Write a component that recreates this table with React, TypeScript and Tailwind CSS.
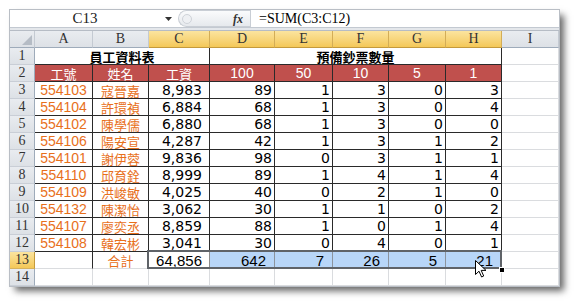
import clsx from "clsx";

const colW = [
  "w-[25px]",
  "w-[58px]",
  "w-[56px]",
  "w-[61px]",
  "w-[65px]",
  "w-[58px]",
  "w-[56px]",
  "w-[57px]",
  "w-[56px]",
  "w-[57px]",
];
const letters = ["A", "B", "C", "D", "E", "F", "G", "H", "I"];

const rows: [string, string, string, number, number, number, number, number][] = [
  ["554103", "寇晉嘉", "8,983", 89, 1, 3, 0, 3],
  ["554104", "許環禎", "6,884", 68, 1, 3, 0, 4],
  ["554102", "陳學儒", "6,880", 68, 1, 3, 0, 0],
  ["554106", "陽安宣", "4,287", 42, 1, 3, 1, 2],
  ["554101", "謝伊蓉", "9,836", 98, 0, 3, 1, 1],
  ["554110", "邱育銓", "8,999", 89, 1, 4, 1, 4],
  ["554109", "洪峻敏", "4,025", 40, 0, 2, 1, 0],
  ["554132", "陳潔怡", "3,062", 30, 1, 1, 0, 2],
  ["554107", "廖奕丞", "8,859", 88, 1, 0, 1, 4],
  ["554108", "韓宏彬", "3,041", 30, 0, 4, 0, 1],
];

const serif = "font-['Liberation_Serif',serif]";
const cjk = "font-['Noto_Sans_CJK_TC',sans-serif]";
const sans = "font-['Liberation_Sans',sans-serif]";
const wide = "font-['DejaVu_Sans',sans-serif]";

function RowHead({ n, on }: { n: number; on?: boolean }) {
  return (
    <div
      className={clsx(
        colW[0],
        serif,
        "shrink-0 h-full flex items-center justify-center border-r border-b text-[14px] leading-none text-[#333]",
        on
          ? "bg-linear-to-b from-[#fbe49e] to-[#f4c857] border-r-[#c49a3c] border-b-[#d7b25c]"
          : "bg-linear-to-b from-[#e9ecf0] to-[#dde1e6] border-r-[#9eabba] border-b-[#c9ced6]"
      )}
    >
      {n}
    </div>
  );
}

function Cell({
  i,
  className,
  children,
}: {
  i: number;
  className?: string;
  children?: React.ReactNode;
}) {
  return (
    <div
      className={clsx(
        colW[i],
        "shrink-0 h-full flex items-center border-r border-b whitespace-nowrap leading-none",
        className
      )}
    >
      {children}
    </div>
  );
}

const dark = "border-[#2a2a2a]";
const light = "border-[#dadcdf]";
const orange = "text-[#e8701b]";

export default function App() {
  return (
    <div className="w-[576px] h-[303px] bg-white relative pl-[10px] pt-[10px]">
      <div className="w-[549px] h-[276px] bg-white shadow-[0_0_0_1px_#b9bec5,5px_5px_7px_rgba(0,0,0,0.6)] flex flex-col overflow-hidden">
        {/* formula bar */}
        <div className="h-[18px] shrink-0 flex items-center border-b border-[#c3c9d1] bg-white">
          <div className={clsx(serif, "w-[150px] text-center text-[15px] text-[#222] leading-none")}>C13</div>
          <svg width="7" height="4" className="ml-[5px]">
            <path d="M0 0 H7 L3.5 4 Z" fill="#333" />
          </svg>
          <div className="ml-[6px] h-[17px] w-[72px] rounded-l-full border border-r-0 border-[#c9ced5] bg-linear-to-b from-[#fafbfc] to-[#e6e9ed] flex items-center">
            <div className="ml-[3px] w-[10px] h-[10px] rounded-full border border-[#cfd3d9] bg-[#eef0f3]" />
            <span className={clsx(serif, "ml-auto mr-[7px] italic font-bold text-[12px] leading-none text-[#333]")}>fx</span>
          </div>
          <div className="h-full w-px bg-[#c9ced5]" />
          <div className={clsx(serif, "ml-[8px] text-[14px] text-black leading-none")}>=SUM(C3:C12)</div>
        </div>
        <div className="h-[3px] shrink-0 bg-[#e4e7eb] border-b border-[#b6bcc5]" />

        {/* column header */}
        <div className="flex h-[17px] shrink-0">
          <div className={clsx(colW[0], "shrink-0 h-full bg-linear-to-b from-[#e9ecf0] to-[#dde1e6] border-r border-b border-r-[#c4cad2] border-b-[#9eabba] flex items-end justify-end p-[2px]")}>
            <svg width="10" height="10">
              <path d="M10 0 V10 H0 Z" fill="#b5bcc5" />
            </svg>
          </div>
          {letters.map((l, k) => {
            const on = k >= 2 && k <= 7;
            return (
              <div
                key={l}
                className={clsx(
                  colW[k + 1],
                  serif,
                  "shrink-0 h-full flex items-center justify-center border-r border-b text-[14px] leading-none text-[#333]",
                  on
                    ? "bg-linear-to-b from-[#fbe49e] to-[#f4c857] border-r-[#d3ad57] border-b-[#c49a3c]"
                    : "bg-linear-to-b from-[#e9ecf0] to-[#dde1e6] border-r-[#c4cad2] border-b-[#9eabba]"
                )}
              >
                {l}
              </div>
            );
          })}
        </div>

        {/* row 1 */}
        <div className="flex h-[17px] shrink-0">
          <RowHead n={1} />
          <div className={clsx("w-[175px] shrink-0 h-full flex items-center justify-center border-r border-b font-bold text-[13px] leading-none text-black", dark, cjk)}>
            員工資料表
          </div>
          <div className={clsx("w-[292px] shrink-0 h-full flex items-center justify-center border-r border-b font-bold text-[13px] leading-none text-black", dark, cjk)}>
            預備鈔票數量
          </div>
          <Cell i={9} className={light} />
        </div>

        {/* row 2 */}
        <div className="flex h-[17px] shrink-0">
          <RowHead n={2} />
          {["工號", "姓名", "工資"].map((t, k) => (
            <Cell key={t} i={k + 1} className={clsx(dark, cjk, "bg-[#c0504d] text-white justify-center text-[13px]")}>
              {t}
            </Cell>
          ))}
          {["100", "50", "10", "5", "1"].map((t, k) => (
            <Cell key={t} i={k + 4} className={clsx(dark, sans, "bg-[#c0504d] text-white justify-center text-[14px]")}>
              {t}
            </Cell>
          ))}
          <Cell i={9} className={light} />
        </div>

        {/* data rows */}
        {rows.map((r, idx) => (
          <div key={r[0]} className="flex h-[17px] shrink-0">
            <RowHead n={idx + 3} />
            <Cell i={1} className={clsx(dark, sans, orange, "justify-center text-[14px]")}>
              {r[0]}
            </Cell>
            <Cell i={2} className={clsx(dark, cjk, orange, "justify-center text-[13px]")}>
              {r[1]}
            </Cell>
            <Cell i={3} className={clsx(dark, wide, "justify-end pr-[7px] text-[14px] text-black")}>
              {r[2]}
            </Cell>
            {[r[3], r[4], r[5], r[6], r[7]].map((v, k) => (
              <Cell key={k} i={k + 4} className={clsx(dark, wide, "justify-end pr-[2px] text-[14px] text-black")}>
                {v}
              </Cell>
            ))}
            <Cell i={9} className={light} />
          </div>
        ))}

        {/* row 13 */}
        <div className="flex h-[17px] shrink-0 relative">
          <RowHead n={13} on />
          <Cell i={1} className="border-r-[#2a2a2a] border-b-[#dadcdf]" />
          <Cell i={2} className={clsx(cjk, orange, "justify-center text-[13px] border-r-[#2a2a2a] border-b-[#dadcdf]")}>
            合計
          </Cell>
          <Cell i={3} className={clsx(sans, "justify-end pr-[7px] text-[15px] text-black border-[#8c8c8c]")}>
            64,856
          </Cell>
          {["642", "7", "26", "5", "21"].map((v, k) => (
            <Cell key={k} i={k + 4} className={clsx(sans, "bg-[#b8d6f8] justify-end pr-[8px] text-[15px] text-black border-[#8c949e]")}>
              {v}
            </Cell>
          ))}
          <Cell i={9} className={light} />
          <div className="absolute left-[137px] top-[-2px] w-[355px] h-[19px] border-2 border-[#5f6368]" />
          <div className="absolute left-[489px] top-[15px] w-[6px] h-[6px] bg-black border border-white" />
          <svg className="absolute left-[465px] top-[8px]" width="12" height="18" viewBox="0 0 12 18">
            <path d="M0.5 0.5 V14.5 L4 11.2 L6.6 17 L8.7 16 L6.2 10.4 H11 Z" fill="white" stroke="black" strokeWidth="1" strokeLinejoin="round" />
          </svg>
        </div>

        {/* row 14 */}
        <div className="flex h-[17px] shrink-0">
          <RowHead n={14} />
          {[1, 2, 3, 4, 5, 6, 7, 8, 9].map((k) => (
            <Cell key={k} i={k} className={light} />
          ))}
        </div>
      </div>
    </div>
  );
}
